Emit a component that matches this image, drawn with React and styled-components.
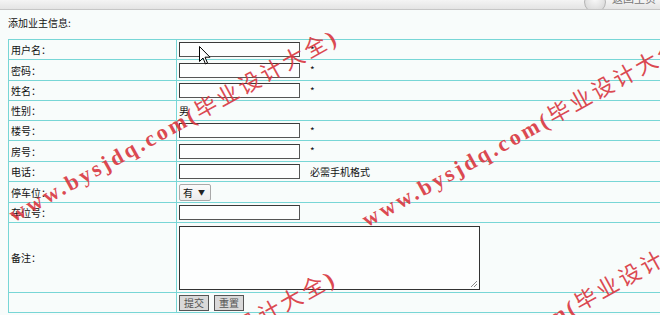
import React from "react";
import styled, { createGlobalStyle } from "styled-components";

const GlobalStyle = createGlobalStyle`
  html, body {
    margin: 0;
    padding: 0;
    background: #f8fcfb;
    overflow: hidden;
  }
  body {
    font-family: "Noto Sans CJK SC", "Liberation Sans", sans-serif;
    font-size: 10px;
    color: #111;
  }
`;

const Page = styled.div`
  position: relative;
  width: 660px;
  height: 315px;
  overflow: hidden;
`;

const TopBar = styled.div`
  height: 9px;
  background: linear-gradient(#f4f4f4, #e4e4e4);
  border-bottom: 1px solid #c6c6c6;
  display: flex;
  justify-content: flex-end;
  align-items: flex-end;
  overflow: hidden;
  padding-right: 4px;
`;

const BackButton = styled.div`
  display: flex;
  align-items: center;
  gap: 6px;
  margin-bottom: -1px;
  color: #777;
  font-size: 11px;
  line-height: 11px;
`;

const BackCircle = styled.span`
  width: 20px;
  height: 20px;
  border-radius: 50%;
  background: radial-gradient(circle at 50% 35%, #fafafa, #cfcfcf);
  border: 1px solid #b5b5b5;
  margin-bottom: -3px;
`;

const BackText = styled.span`
  margin-bottom: 4px;
`;

const Title = styled.div`
  margin: 6px 0 10px 8px;
  line-height: 13px;
  height: 13px;
`;

const Table = styled.table`
  margin-left: 8px;
  width: 700px;
  border-collapse: collapse;
  border: 1px solid #78d6d6;
`;

const Row = styled.tr`
  height: ${(p) => p.$h}px;
`;

const LabelCell = styled.td`
  width: 165px;
  border: 1px solid #78d6d6;
  padding: 0 0 0 2px;
  vertical-align: middle;
  white-space: nowrap;
`;

const ValueCell = styled.td`
  border: 1px solid #78d6d6;
  padding: 0 0 0 2px;
  vertical-align: middle;
  white-space: nowrap;
`;

const Field = styled.div`
  display: flex;
  align-items: center;
  gap: 10px;
`;

const TextInput = styled.span`
  display: inline-block;
  width: 119px;
  height: 13px;
  border: 1px solid #3a3a3a;
  border-right-color: #555;
  border-bottom-color: #555;
  background: #fdfefe;
`;

const Note = styled.span`
  line-height: 12px;
`;

const Select = styled.span`
  display: inline-flex;
  align-items: center;
  gap: 5px;
  height: 15px;
  padding: 0 5px 0 3px;
  border: 1px solid #a9a9a9;
  border-radius: 2px;
  background: linear-gradient(#fbfbfb, #ececec);
  font-size: 10px;
`;

const Arrow = styled.span`
  font-size: 7px;
  color: #222;
`;

const TextArea = styled.span`
  position: relative;
  display: block;
  width: 299px;
  height: 62px;
  border: 1px solid #333;
  background: #fdfefe;
`;

const Grip = styled.svg`
  position: absolute;
  right: 1px;
  bottom: 1px;
`;

const Buttons = styled.div`
  display: flex;
  gap: 5px;
`;

const Button = styled.span`
  display: inline-flex;
  align-items: center;
  justify-content: center;
  width: 28px;
  height: 14px;
  border: 1px solid #555;
  background: #d9d9d9;
  color: #555;
  font-size: 10px;
`;

const Watermark = styled.span`
  position: absolute;
  left: ${(p) => p.$x}px;
  top: ${(p) => p.$y}px;
  transform-origin: 0 50%;
  transform: translateY(-50%) rotate(-29deg);
  white-space: nowrap;
  color: #d8363f;
  font-size: 22px;
  line-height: 24px;
  letter-spacing: 3px;
  pointer-events: none;
  opacity: 0.9;
`;

const WmLatin = styled.span`
  font-family: "Liberation Serif", serif;
  font-weight: bold;
`;

const WmCjk = styled.span`
  font-family: "Noto Sans CJK SC", sans-serif;
  font-weight: 400;
`;

const Cursor = styled.svg`
  position: absolute;
  left: 199px;
  top: 46px;
`;

const rows = [
  { label: "用户名：", h: 20, type: "input", note: "*" },
  { label: "密码：", h: 21, type: "input", note: "*" },
  { label: "姓名：", h: 20, type: "input", note: "*" },
  { label: "性别：", h: 20, type: "text", value: "男" },
  { label: "楼号：", h: 20, type: "input", note: "*" },
  { label: "房号：", h: 21, type: "input", note: "*" },
  { label: "电话：", h: 20, type: "input", note: "必需手机格式" },
  { label: "停车位：", h: 21, type: "select" },
  { label: "车位号：", h: 20, type: "input" },
];

const marks = [
  { x: 10, y: 215 },
  { x: 363, y: 220 },
  { x: 8, y: 456 },
  { x: 390, y: 407 },
];

function Value({ row }) {
  if (row.type === "text") return <span>{row.value}</span>;
  if (row.type === "select")
    return (
      <Select>
        有<Arrow>▼</Arrow>
      </Select>
    );
  return (
    <Field>
      <TextInput />
      {row.note && <Note>{row.note}</Note>}
    </Field>
  );
}

export default function App() {
  return (
    <Page>
      <GlobalStyle />
      <TopBar>
        <BackButton>
          <BackCircle />
          <BackText>返回主页</BackText>
        </BackButton>
      </TopBar>
      <Title>添加业主信息:</Title>
      <Table>
        <tbody>
          {rows.map((r) => (
            <Row key={r.label} $h={r.h}>
              <LabelCell>{r.label}</LabelCell>
              <ValueCell>
                <Value row={r} />
              </ValueCell>
            </Row>
          ))}
          <Row $h={70}>
            <LabelCell>备注：</LabelCell>
            <ValueCell>
              <TextArea>
                <Grip width="8" height="8" viewBox="0 0 8 8">
                  <path d="M7 1 L1 7 M7 4 L4 7" stroke="#888" strokeWidth="1" />
                </Grip>
              </TextArea>
            </ValueCell>
          </Row>
          <Row $h={20}>
            <LabelCell />
            <ValueCell>
              <Buttons>
                <Button>提交</Button>
                <Button>重置</Button>
              </Buttons>
            </ValueCell>
          </Row>
        </tbody>
      </Table>
      {marks.map((m) => (
        <Watermark key={`${m.x}-${m.y}`} $x={m.x} $y={m.y}>
          <WmLatin>www.bysjdq.com(</WmLatin>
          <WmCjk>毕业设计大全</WmCjk>
          <WmLatin>)</WmLatin>
        </Watermark>
      ))}
      <Cursor width="12" height="19" viewBox="0 0 12 19">
        <path
          d="M0.5 0.5 L0.5 15.5 L4 12 L6.5 18 L8.5 17 L6 11.2 L11 11.2 Z"
          fill="#fff"
          stroke="#000"
          strokeWidth="1"
          strokeLinejoin="round"
        />
      </Cursor>
    </Page>
  );
}
